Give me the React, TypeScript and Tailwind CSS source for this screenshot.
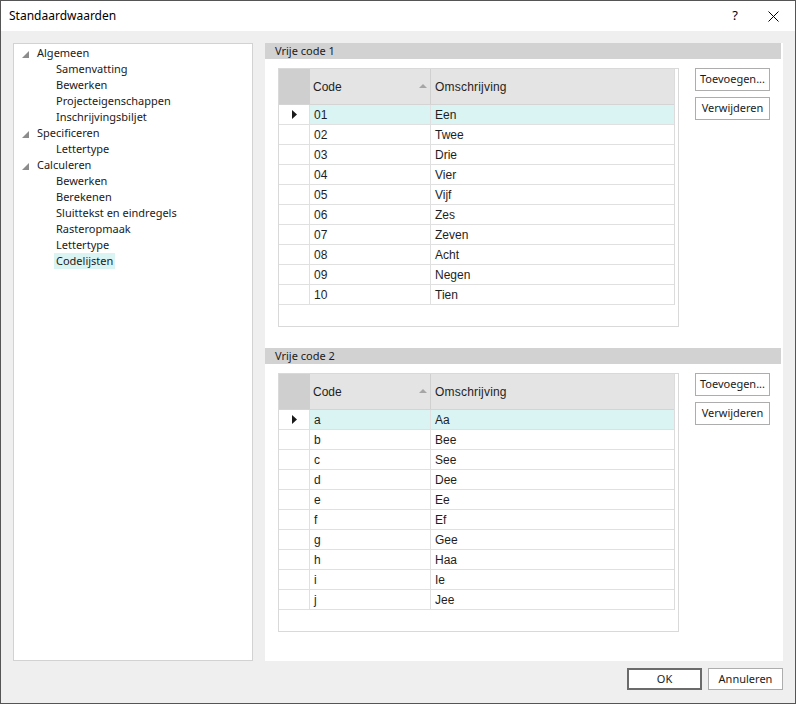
import React from "react";

const ui = { fontFamily: '"Noto Sans", "Open Sans", sans-serif' };
const gridFont = { fontFamily: '"Liberation Sans", Arial, sans-serif' };

type TreeNode = { label: string; children?: string[] };

const tree: TreeNode[] = [
  { label: "Algemeen", children: ["Samenvatting", "Bewerken", "Projecteigenschappen", "Inschrijvingsbiljet"] },
  { label: "Specificeren", children: ["Lettertype"] },
  {
    label: "Calculeren",
    children: ["Bewerken", "Berekenen", "Sluittekst en eindregels", "Rasteropmaak", "Lettertype", "Codelijsten"],
  },
];

const Expander = () => (
  <svg width="7" height="7" viewBox="0 0 7 7" className="block">
    <polygon points="7,0 7,7 0,7" fill="#8c8c8c" />
  </svg>
);

function Tree() {
  return (
    <div
      className="w-[240px] h-[618px] bg-white border border-[#d2d2d2] pt-[1px] text-[11px] text-[#1a1a1a] leading-[16px]"
      style={ui}
    >
      {tree.map((n) => (
        <div key={n.label}>
          <div className="flex items-center h-[16px]">
            <div className="w-[23px] pl-[8px] pt-[3px]">
              <Expander />
            </div>
            <span>{n.label}</span>
          </div>
          {n.children?.map((c) => (
            <div key={c} className="flex items-center h-[16px] pl-[42px]">
              <span className={c === "Codelijsten" ? "bg-[#daf4f4] px-[2px] -ml-[2px]" : ""}>{c}</span>
            </div>
          ))}
        </div>
      ))}
    </div>
  );
}

function Grid({ rows }: { rows: [string, string][] }) {
  return (
    <div className="w-[401px] h-[259px] border border-[#d9d9d9] bg-white text-[12px] text-[#1e1e1e]" style={gridFont}>
      <div className="w-[396px] border-r border-[#dcdcdc]">
        <div className="flex h-[36px] border-b border-[#d4d4d4]">
          <div className="w-[31px] bg-[#cfcfcf]" />
          <div className="w-[121px] bg-[#e4e4e4] flex items-center justify-between pl-[3px] pr-[3px] border-r border-[#d0d0d0]">
            <span>Code</span>
            <svg width="8" height="5" viewBox="0 0 8 5">
              <polygon points="0,4 4,0 8,4" fill="#a6a6a6" />
            </svg>
          </div>
          <div className="flex-1 bg-[#e4e4e4] flex items-center pl-[4px] tracking-[0.2px]">Omschrijving</div>
        </div>
        {rows.map(([code, desc], i) => (
          <div key={code} className="flex h-[20px] border-b border-[#e0e0e0]">
            <div className="w-[31px] border-r border-[#e0e0e0] flex items-center justify-center pl-[1px]">
              {i === 0 && (
                <svg width="5" height="9" viewBox="0 0 5 9">
                  <polygon points="0,0 5,4.5 0,9" fill="#1a1a1a" />
                </svg>
              )}
            </div>
            <div
              className={`w-[121px] border-r border-[#e0e0e0] flex items-center pl-[4px] ${i === 0 ? "bg-[#daf4f4]" : ""}`}
            >
              {code}
            </div>
            <div className={`flex-1 flex items-center pl-[4px] ${i === 0 ? "bg-[#daf4f4]" : ""}`}>{desc}</div>
          </div>
        ))}
      </div>
    </div>
  );
}

function Btn({ children }: { children: React.ReactNode }) {
  return (
    <div
      className="w-[75px] h-[23px] border border-[#adadad] bg-white flex items-center justify-center text-[11px] text-[#1a1a1a]"
      style={ui}
    >
      {children}
    </div>
  );
}

function Group({ title, rows }: { title: string; rows: [string, string][] }) {
  return (
    <div className="h-[305px]">
      <div className="h-[16px] w-[516px] bg-[#d2d2d2] pl-[10px] text-[11px] leading-[16px] text-[#1a1a1a]" style={ui}>
        {title}
      </div>
      <div className="flex mt-[9px] ml-[13px]">
        <Grid rows={rows} />
        <div className="ml-[16px] flex flex-col gap-[6px]">
          <Btn>Toevoegen...</Btn>
          <Btn>Verwijderen</Btn>
        </div>
      </div>
    </div>
  );
}

export default function App() {
  const rows1: [string, string][] = [
    ["01", "Een"],
    ["02", "Twee"],
    ["03", "Drie"],
    ["04", "Vier"],
    ["05", "Vijf"],
    ["06", "Zes"],
    ["07", "Zeven"],
    ["08", "Acht"],
    ["09", "Negen"],
    ["10", "Tien"],
  ];
  const rows2: [string, string][] = [
    ["a", "Aa"],
    ["b", "Bee"],
    ["c", "See"],
    ["d", "Dee"],
    ["e", "Ee"],
    ["f", "Ef"],
    ["g", "Gee"],
    ["h", "Haa"],
    ["i", "Ie"],
    ["j", "Jee"],
  ];
  return (
    <div className="w-[796px] h-[704px] border border-[#555555] bg-[#efefef] flex flex-col" style={ui}>
      <div className="h-[30px] bg-white flex items-center justify-between pl-[8px] pr-[16px] text-[12px] text-black">
        <span>Standaardwaarden</span>
        <div className="flex items-center gap-[30px]">
          <span className="text-[13px]">?</span>
          <svg width="11" height="11" viewBox="0 0 11 11">
            <path d="M0.5 0.5 L10.5 10.5 M10.5 0.5 L0.5 10.5" stroke="#000" strokeWidth="1" />
          </svg>
        </div>
      </div>
      <div className="flex pt-[12px] pl-[12px] gap-[12px]">
        <Tree />
        <div className="w-[518px] h-[618px] bg-white">
          <Group title="Vrije code 1" rows={rows1} />
          <Group title="Vrije code 2" rows={rows2} />
        </div>
      </div>
      <div className="flex justify-end gap-[6px] pr-[12px] mt-[7px]">
        <div className="w-[75px] h-[22px] border-2 border-[#6b6b6b] bg-white flex items-center justify-center text-[11px] text-[#1a1a1a]">
          OK
        </div>
        <div className="w-[75px] h-[22px] border border-[#adadad] bg-white flex items-center justify-center text-[11px] text-[#1a1a1a]">
          Annuleren
        </div>
      </div>
    </div>
  );
}
